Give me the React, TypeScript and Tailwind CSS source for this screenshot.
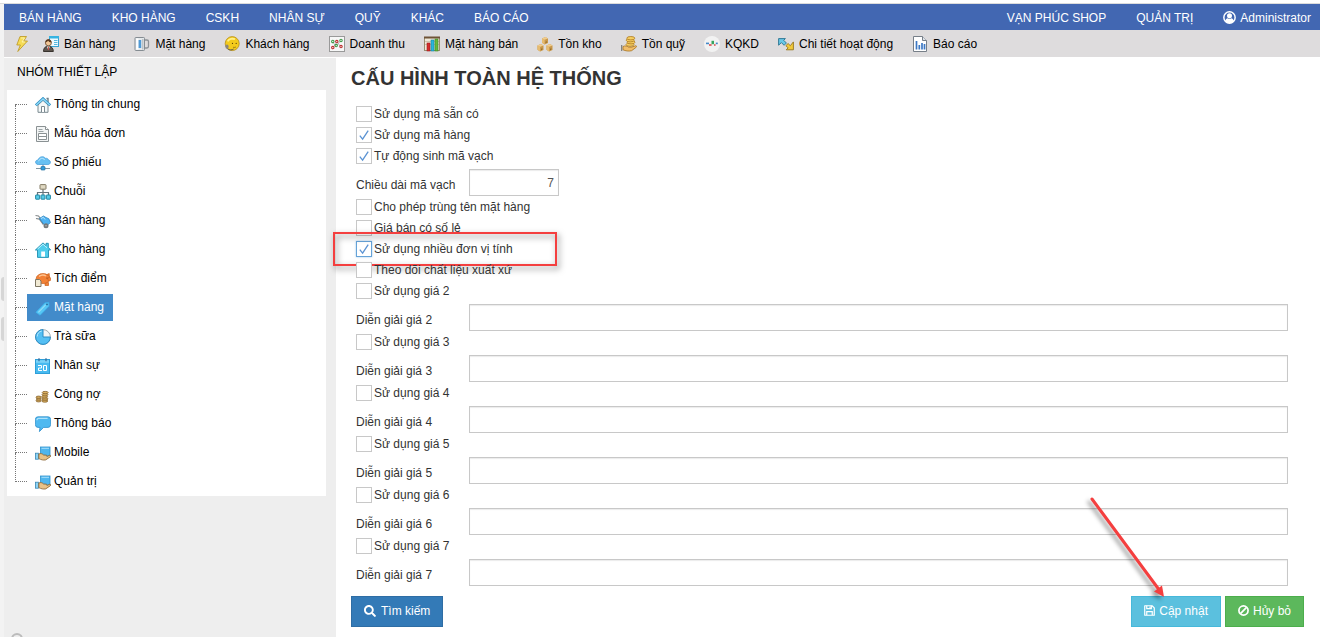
import type { ReactNode } from "react";
import { FaSearch } from "react-icons/fa";

/* Glyphs for the menu and buttons */

const UserGlyph = () => (
  <svg className="h-[13px] w-[13px]" viewBox="0 0 14 14">
    <circle cx="7" cy="7" r="6.1" fill="none" stroke="#fff" strokeWidth="1.6" />
    <circle cx="7" cy="5.2" r="2.7" fill="#fff" />
    <path d="M2.2 10.9c.6-2 1.8-3 2.9-3.2 1.1.8 2.7.8 3.8 0 1.1.2 2.3 1.2 2.9 3.2-2.4 3-7.2 3-9.6 0z" fill="#fff" />
  </svg>
);

const SaveGlyph = () => (
  <svg className="h-[11px] w-[11px]" viewBox="0 0 12 12" fill="none" stroke="#fff" strokeWidth="1.3">
    <path d="M.8.8h8l2.4 2.4v8H.8z" strokeLinejoin="round" />
    <path d="M3 .8V4h5V.8M3 11V7.2h6V11" />
    <path d="M6.6 1.5v1.8" />
  </svg>
);

const BanGlyph = () => (
  <svg className="h-[11px] w-[11px]" viewBox="0 0 12 12" fill="none" stroke="#fff" strokeWidth="1.9">
    <circle cx="6" cy="6" r="5" />
    <path d="M2.7 9.3l6.6-6.6" />
  </svg>
);

/* Toolbar icons */

const BoltIcon = () => (
  <svg className="h-4 w-4 shrink-0" viewBox="0 0 16 16">
    <path d="M6 .5h6.5L9.8 5h3.7L3.8 15.5 6.4 9H2.8z" fill="#f6dc55" stroke="#c09d2c" strokeWidth=".9" strokeLinejoin="round" />
    <path d="M7 2h3.5L8 6h3" fill="none" stroke="#fff6b8" strokeWidth=".8" />
  </svg>
);

const SellerIcon = () => (
  <svg className="h-4 w-4 shrink-0" viewBox="0 0 16 16">
    <rect x="6.5" y=".5" width="9" height="10" fill="#eefaff" stroke="#36a3d2" />
    <rect x="6" y="0" width="10" height="2.5" fill="#36b4e2" />
    <path d="M11 4.5h3.5M11 6.5h3.5M11 8.5h3.5" stroke="#58b8de" />
    <path d="M.5 15.5c0-3.6 1.7-5.2 4.8-5.2s5 1.6 5 5.2z" fill="#5d554e" stroke="#38332e" />
    <path d="M3.8 10.4l1.6 3.6L7 10.4z" fill="#fff" />
    <path d="M5.4 11v3" stroke="#c6413a" />
    <circle cx="5.4" cy="6.8" r="3" fill="#f1c696" stroke="#6b4526" strokeWidth=".8" />
    <path d="M2.3 6.6c0-4.6 6.2-4.6 6.2 0-2-.2-2.8-1-3.4-1.8-.6.8-1.4 1.4-2.8 1.8z" fill="#5b3a20" />
  </svg>
);

const MugIcon = () => (
  <svg className="h-4 w-4 shrink-0" viewBox="0 0 16 16">
    <path d="M10.5 4h2.4q1.6 0 1.6 1.6v4.6q0 1.8-1.6 1.8h-2.4" fill="none" stroke="#8d9297" strokeWidth="1.3" />
    <rect x="1" y="1.5" width="9.5" height="13" rx=".8" fill="#e4e9ec" stroke="#858c92" />
    <rect x="2.2" y="2.5" width="2.2" height="11" fill="#fff" />
    <rect x="4.6" y="4" width="2.6" height="8" fill="#4f9ad6" />
    <path d="M8.8 3v10.5" stroke="#b4babf" strokeWidth="1.2" />
  </svg>
);

const SupportIcon = () => (
  <svg className="h-4 w-4 shrink-0" viewBox="0 0 16 16">
    <circle cx="8.2" cy="7.6" r="7" fill="#f4cb1c" stroke="#b58e1a" strokeWidth=".8" />
    <path d="M3.6 5.4C5 2.8 8.5 2.2 11 3.2" fill="none" stroke="#fff08a" strokeWidth="1.8" />
    <circle cx="8.5" cy="7.4" r=".6" fill="#5c4208" />
    <circle cx="12.2" cy="7.4" r=".6" fill="#5c4208" />
    <path d="M9 11.2c1.100.4 2.100.3 3-.3" fill="none" stroke="#8a6812" strokeWidth=".8" />
    <ellipse cx="3" cy="10.6" rx="1.6" ry="2.2" fill="#8a867d" />
    <path d="M3.6 12.8c1.800 1.400 4.200 1.400 6 .2" fill="none" stroke="#66614f" />
  </svg>
);

const ScatterIcon = () => (
  <svg className="h-4 w-4 shrink-0" viewBox="0 0 16 16">
    <rect x=".5" y=".5" width="15" height="15" fill="#f7f7f7" stroke="#999" />
    <path d="M3.5 6l3.5 4 5-5.5M4 11.5L8 6l4 5" fill="none" stroke="#a9a9a9" strokeWidth=".8" />
    <g fill="#fff" strokeWidth="1.1">
      <circle cx="3.8" cy="5.4" r="1.2" stroke="#3f9b49" />
      <circle cx="7.2" cy="9.6" r="1.2" stroke="#3f9b49" />
      <circle cx="12" cy="4.4" r="1.2" stroke="#3f9b49" />
      <circle cx="3.8" cy="11.6" r="1.2" stroke="#bc3030" />
      <circle cx="7.8" cy="5.6" r="1.2" stroke="#bc3030" />
      <circle cx="12" cy="10.6" r="1.2" stroke="#bc3030" />
    </g>
  </svg>
);

const BarsIcon = () => (
  <svg className="h-4 w-4 shrink-0" viewBox="0 0 16 16">
    <rect x=".5" y="1.5" width="15" height="13" fill="#eee8d8" stroke="#9a8c70" />
    <path d="M0 1.5h16" stroke="#6f5336" strokeWidth="2" />
    <path d="M1 5.5h14M1 8.5h14" stroke="#cdc4b0" />
    <rect x="3" y="7" width="3" height="8" fill="#d52c2c" stroke="#9c1c1c" strokeWidth=".6" />
    <rect x="7" y="4" width="3" height="11" fill="#29b6dc" stroke="#1683a3" strokeWidth=".6" />
    <rect x="11" y="3" width="3" height="12" fill="#65b83c" stroke="#3e8423" strokeWidth=".6" />
  </svg>
);

const BoxesIcon = () => (
  <svg className="h-4 w-4 shrink-0" viewBox="0 0 16 16">
    {["translate(5 1)", "translate(.5 8)", "translate(9.5 8)"].map((t) => (
      <g key={t} transform={t}>
        <path d="M0 1.5L3.4 0 6 1.4V6L2.6 7.4 0 5.8z" fill="#c8974a" />
        <path d="M0 1.5l2.6 1.3v4.6L0 5.8z" fill="#e6bb70" />
        <path d="M0 1.5L3.4 0 6 1.4 2.6 2.8z" fill="#f0cd8e" />
        <path d="M3.6 4.8l1.2-.6v1.4l-1.2.6z" fill="#8d6728" />
      </g>
    ))}
  </svg>
);

const CoinHandIcon = () => (
  <svg className="h-4 w-4 shrink-0" viewBox="0 0 16 16">
    <path d="M.7 9v6" stroke="#797979" strokeWidth="1.2" />
    <path d="M2 10.5c2-1 4-.6 5.5.6h3.2l4.2-1.4c1 .2.8 1.2 0 1.8l-4.3 3.2c-3 .8-6 .2-8.6-.9z" fill="#f1bd69" stroke="#a77420" strokeWidth=".8" />
    <g fill="#f6cf60" stroke="#b4822a" strokeWidth=".9">
      <ellipse cx="9" cy="8.6" rx="4" ry="1.7" />
      <ellipse cx="10" cy="6.2" rx="4" ry="1.7" />
      <ellipse cx="9.2" cy="4.2" rx="4" ry="1.7" />
      <ellipse cx="9.8" cy="2.2" rx="4" ry="1.7" />
    </g>
  </svg>
);

const ResultIcon = () => (
  <svg className="h-4 w-4 shrink-0" viewBox="0 0 16 16">
    <circle cx="8" cy="8" r="8" fill="#f2f2f2" />
    <path d="M2 7.4h3" stroke="#4689c8" strokeWidth="1.6" />
    <path d="M5 9h2.6" stroke="#da4848" strokeWidth="1.6" />
    <path d="M7.5 6.5H10" stroke="#38a45e" strokeWidth="3.4" />
    <path d="M10 9h1.6" stroke="#da4848" strokeWidth="1.6" />
    <path d="M11.8 7.4h2" stroke="#4689c8" strokeWidth="1.6" />
  </svg>
);

const ArrowsIcon = () => (
  <svg className="h-4 w-4 shrink-0" viewBox="0 0 16 16">
    <path d="M.6 2.6h6.8L5.7 4.3 8.4 7 6.1 9.3 3.4 6.6.6 9.2z" fill="#68c8e7" stroke="#27708d" strokeWidth=".9" />
    <path d="M15.4 5.9v7.9H8.2l1.9-1.9-2.2-2.2 2.2-2.2 2.2 2.2z" fill="#f1ca3c" stroke="#967519" strokeWidth=".9" />
  </svg>
);

const ReportIcon = () => (
  <svg className="h-4 w-4 shrink-0" viewBox="0 0 16 16">
    <path d="M1.5.5h9l4 4v11h-13z" fill="#fff" stroke="#777f88" />
    <path d="M10.5.5v4h4" fill="#dfe4ea" stroke="#777f88" />
    <path d="M4.5 13.5V5M7.3 13.5V9M10 13.5V7M12.5 13.5V8" stroke="#3d78c4" strokeWidth="1.7" />
  </svg>
);

/* Tree icons */

const HomeLineIcon = () => (
  <svg className="h-4 w-4 shrink-0" viewBox="0 0 16 16">
    <path d="M3 8v7.3h10V8L8 3.4z" fill="#f4f8f9" stroke="#7b8a90" />
    <path d="M11.5 1.5H13v4" stroke="#6c7e87" strokeWidth="1.4" fill="none" />
    <path d="M.8 8.4L8 1.6l7.2 6.8" fill="none" stroke="#2f8fc3" strokeWidth="2.6" />
    <path d="M1.2 8.1L8 1.9l6.8 6.2" fill="none" stroke="#8edaf8" strokeWidth="1.3" />
    <path d="M6.5 15V9.5h3V15" fill="#fff" stroke="#7b8a90" />
  </svg>
);

const InvoiceIcon = () => (
  <svg className="h-4 w-4 shrink-0" viewBox="0 0 16 16">
    <path d="M1.5.5h9l3 3v12h-12z" fill="#f3f5f5" stroke="#8a9193" />
    <path d="M10.5.5v3h3" fill="#fff" stroke="#8a9193" />
    <path d="M3.5 3.5h4M3.5 5.5h5" stroke="#9aa3a5" />
    <path d="M3.5 7.5h8v6h-8zM3.5 10.5h8" fill="#fff" stroke="#8a9193" />
  </svg>
);

const CloudIcon = () => (
  <svg className="h-4 w-4 shrink-0" viewBox="0 0 16 16">
    <path d="M8 9v4M1 13.5h14" stroke="#8697a1" strokeWidth="1.2" />
    <path d="M3.5 9.5C-.5 9.5-.2 4.8 3.2 5 4 1.2 9 .8 10.3 3.3c2-.3 3 .7 3 1.7 3 .5 2.8 4.5-.4 4.5z" fill="#67c0f2" stroke="#4a9fdc" strokeWidth=".8" />
    <path d="M3.6 6.2C5 3 8.2 2.3 9.6 5" stroke="#c4ecff" fill="none" />
    <rect x="6" y="11.5" width="4" height="3.5" rx=".6" fill="#339bda" stroke="#22719f" strokeWidth=".7" />
  </svg>
);

const ChainIcon = () => (
  <svg className="h-4 w-4 shrink-0" viewBox="0 0 16 16">
    <path d="M8 5v6M2.5 11V8.5h11V11" fill="none" stroke="#66747b" strokeWidth="1.2" />
    <rect x="5" y=".6" width="6" height="4.6" rx=".6" fill="#dfd8c2" stroke="#837b65" />
    <g fill="#58cbe7" stroke="#2388a4">
      <rect x=".6" y="11" width="4" height="4.2" rx=".4" />
      <rect x="6" y="11" width="4" height="4.2" rx=".4" />
      <rect x="11.4" y="11" width="4" height="4.2" rx=".4" />
    </g>
  </svg>
);

const CartIcon = () => (
  <svg className="h-4 w-4 shrink-0" viewBox="0 0 16 16">
    <path d="M.5 2.5l3 .5 7 9M1 5.5l3.4.6 4 5.6" fill="none" stroke="#84898b" strokeWidth="1.2" />
    <path d="M4.5 5.5L8.4 3 11 4.5l2.8 1.2 1.7 3.8-3.3 2.8-3.4-1z" fill="#4eb2f2" stroke="#2c83bf" strokeWidth=".8" />
    <path d="M6 5.5l2.3-1.2 1.8 2.2" fill="none" stroke="#b5e4fd" />
    <circle cx="11" cy="12.8" r="2.5" fill="#73787b" />
    <circle cx="11" cy="12.8" r=".8" fill="#b3b7b9" />
  </svg>
);

const HomeSolidIcon = () => (
  <svg className="h-4 w-4 shrink-0" viewBox="0 0 16 16">
    <path d="M11 1.3h2.3v4L15.6 8H13.5v7.4h-11V8H.4L8 .9l3 2.7z" fill="#4fcdec" stroke="#1e8fb1" strokeWidth=".9" strokeLinejoin="round" />
    <path d="M2.6 7L8 2.2l4 3.6" fill="none" stroke="#bdf1ff" />
    <rect x="6.2" y="9.5" width="3.8" height="5.2" fill="#fff" />
  </svg>
);

const PiggyIcon = () => (
  <svg className="h-4 w-4 shrink-0" viewBox="0 0 16 16">
    <g fill="#f28136" stroke="#c9601d" strokeWidth=".7">
      <path d="M10 11.500h3.500v3H10z" />
      <path d="M11 4l3.200-1.500.2 3.500z" />
      <ellipse cx="8" cy="7.6" rx="6.8" ry="5" />
      <rect x="13" y="6.4" width="2.6" height="3.4" rx="1" />
    </g>
    <path d="M4 5.400c2.200-1.600 5-1.700 7-.4" stroke="#ffc492" fill="none" strokeWidth="1.4" />
    <circle cx="12" cy="7" r=".6" fill="#6a2b08" />
    <path d="M.5 8.5h4L6 10v5.500H.5z" fill="#f1ead4" stroke="#7e7764" />
  </svg>
);

const TagIcon = () => (
  <svg className="h-4 w-4 shrink-0" viewBox="0 0 16 16">
    <path d="M1 12.3L9.8 2.9l3.9-.5.3 3.8-8.9 9z" fill="#55c6f4" stroke="#3fb1ec" strokeWidth=".8" />
    <path d="M3.4 12.4l7.2-7.5" stroke="#93dcf8" strokeWidth="1.2" />
    <circle cx="12" cy="4.4" r=".9" fill="#28689c" />
  </svg>
);

const PieIcon = () => (
  <svg className="h-4 w-4 shrink-0" viewBox="0 0 16 16">
    <circle cx="8" cy="8" r="7.4" fill="#f3f5f6" stroke="#a3acb1" />
    <path d="M8 .6a7.4 7.4 0 1 0 7.4 7.4H8z" fill="#55bff3" stroke="#2a8cc5" />
    <path d="M2.2 7.5A6 6 0 0 1 6.8 2" fill="none" stroke="#b5e7fd" />
  </svg>
);

const CalendarIcon = () => (
  <svg className="h-4 w-4 shrink-0" viewBox="0 0 16 16">
    <rect x=".5" y="1.5" width="14" height="14" fill="#48baf0" stroke="#2f9fd8" />
    <path d="M1 3.5h13" stroke="#7bd2f7" strokeWidth="2.6" />
    <path d="M4 .3v3M11 .3v3" stroke="#386c9b" strokeWidth="1.3" />
    <path d="M3 7.5h3.5V10h-3v2.5H7M8.5 7.5h3v5h-3z" fill="none" stroke="#fff" />
  </svg>
);

const DebtIcon = () => (
  <svg className="h-4 w-4 shrink-0" viewBox="0 0 16 16">
    <g fill="#dcb263" stroke="#83602a" strokeWidth=".8">
      <ellipse cx="3.6" cy="13.8" rx="2.6" ry="1.1" />
      <ellipse cx="3.8" cy="12" rx="2.6" ry="1.1" />
      <ellipse cx="3.6" cy="10.2" rx="2.6" ry="1.1" />
      <ellipse cx="9.8" cy="14" rx="3" ry="1.2" />
      <ellipse cx="10" cy="11.9" rx="3" ry="1.2" />
      <ellipse cx="9.6" cy="9.8" rx="3" ry="1.2" />
      <ellipse cx="10" cy="7.7" rx="3" ry="1.2" />
      <ellipse cx="10.2" cy="5.6" rx="3" ry="1.2" />
    </g>
  </svg>
);

const BubbleIcon = () => (
  <svg className="h-4 w-4 shrink-0" viewBox="0 0 16 16">
    <path d="M3 .8h10q2.6 0 2.6 2.6v5.2q0 2.8-2.6 2.8H8.6l-4.2 4.2.6-4.2H3Q.4 11.4.4 8.6V3.4Q.4.8 3 .8z" fill="#4fb9f0" stroke="#2c8ecb" strokeWidth=".8" />
    <path d="M2 4.2q0-1.8 1.6-1.8h9" fill="none" stroke="#aee2fb" strokeWidth="1.2" />
  </svg>
);

const HandIcon = () => (
  <svg className="h-4 w-4 shrink-0" viewBox="0 0 16 16">
    <rect x="5.5" y="2" width="9.5" height="9.5" fill="#4fb6ee" stroke="#2f92cd" strokeWidth=".8" />
    <path d="M6.5 3.3h7.5" stroke="#a8e0fb" />
    <rect x=".5" y="8.2" width="3" height="6" fill="#8cd3f5" stroke="#3a87b3" strokeWidth=".8" />
    <path d="M3.8 9c2-.9 3.6-.2 4.8 1l3 .2.3 1.2 3-1.2c1.1.1 1 1.1.2 1.7l-4.4 3c-2.4.5-4.8-.2-6.9-1.3z" fill="#e9c287" stroke="#86602c" strokeWidth=".8" />
  </svg>
);

/* Data */

const menu = ["BÁN HÀNG", "KHO HÀNG", "CSKH", "NHÂN SỰ", "QUỸ", "KHÁC", "BÁO CÁO"];

const shortcuts: { label: string; icon: ReactNode }[] = [
  { label: "Bán hàng", icon: <SellerIcon /> },
  { label: "Mặt hàng", icon: <MugIcon /> },
  { label: "Khách hàng", icon: <SupportIcon /> },
  { label: "Doanh thu", icon: <ScatterIcon /> },
  { label: "Mặt hàng bán", icon: <BarsIcon /> },
  { label: "Tồn kho", icon: <BoxesIcon /> },
  { label: "Tồn quỹ", icon: <CoinHandIcon /> },
  { label: "KQKD", icon: <ResultIcon /> },
  { label: "Chi tiết hoạt động", icon: <ArrowsIcon /> },
  { label: "Báo cáo", icon: <ReportIcon /> },
];

const tree: { label: string; icon: ReactNode; active?: boolean }[] = [
  { label: "Thông tin chung", icon: <HomeLineIcon /> },
  { label: "Mẫu hóa đơn", icon: <InvoiceIcon /> },
  { label: "Số phiếu", icon: <CloudIcon /> },
  { label: "Chuỗi", icon: <ChainIcon /> },
  { label: "Bán hàng", icon: <CartIcon /> },
  { label: "Kho hàng", icon: <HomeSolidIcon /> },
  { label: "Tích điểm", icon: <PiggyIcon /> },
  { label: "Mặt hàng", icon: <TagIcon />, active: true },
  { label: "Trà sữa", icon: <PieIcon /> },
  { label: "Nhân sự", icon: <CalendarIcon /> },
  { label: "Công nợ", icon: <DebtIcon /> },
  { label: "Thông báo", icon: <BubbleIcon /> },
  { label: "Mobile", icon: <HandIcon /> },
  { label: "Quản trị", icon: <HandIcon /> },
];

const prices = [2, 3, 4, 5, 6, 7];

/* Form rows */

const CheckRow = ({ label, checked, marked }: { label: string; checked?: boolean; marked?: boolean }) => (
  <div className="relative flex h-[21px] items-center">
    <label className="flex items-center gap-[2px]">
      <span className="grid">
        <input
          type="checkbox"
          defaultChecked={checked}
          className={`peer col-start-1 row-start-1 h-4 w-4 appearance-none border bg-white ${
            marked ? "border-[#66a3d8] shadow-[0_0_2px_#9cc6ea]" : "border-[#c8c8c8]"
          }`}
        />
        <svg
          className="pointer-events-none invisible col-start-1 row-start-1 h-4 w-4 peer-checked:visible"
          viewBox="0 0 16 16"
        >
          <path d="M3.8 8.6l2.8 3.6L12.2 3.6" fill="none" stroke="#5b93d3" strokeWidth="1.3" />
        </svg>
      </span>
      {label}
    </label>
    {marked && (
      <div className="pointer-events-none absolute -top-[6px] -left-[23px] h-[34px] w-[224px] border-2 border-[#f43f3f] drop-shadow-[2px_3px_3px_rgba(0,0,0,0.5)]" />
    )}
  </div>
);

const FieldRow = ({ id, label, short }: { id: string; label: string; short?: boolean }) => (
  <div className="flex items-start pt-[3px]">
    <label htmlFor={id} className="w-[113px] shrink-0 pt-2 leading-4">
      {label}
    </label>
    <input
      id={id}
      type="text"
      defaultValue={short ? "7" : ""}
      className={`h-[27px] border border-[#c8c8c8] bg-white px-1 text-[#555] shadow-[inset_0_1px_1px_rgba(0,0,0,0.08)] outline-none ${
        short ? "w-[90px] text-right" : "min-w-0 flex-1"
      }`}
    />
  </div>
);

export default function App() {
  return (
    <div className="flex min-h-screen flex-col overflow-hidden bg-white font-['Liberation_Sans',Arial,sans-serif] text-xs text-black">
      <div className="h-1 border-b border-[#dcdcdc] bg-white" />
      <div className="flex flex-1">
        {/* Splitter */}
        <div className="flex w-1 shrink-0 flex-col gap-4 bg-[#f3f3f3] pt-[273px]">
          <div className="ml-px h-6 rounded-l-sm bg-[#d6d6d6]" />
          <div className="ml-px h-6 rounded-l-sm bg-[#d6d6d6]" />
        </div>

        <div className="flex min-w-0 flex-1 flex-col">
          {/* Main menu */}
          <nav className="flex h-[26px] items-center justify-between bg-[#4267b2] pt-px text-white">
            <div className="flex">
              {menu.map((item) => (
                <a key={item} href="#" className="px-[15px]">
                  {item}
                </a>
              ))}
            </div>
            <div className="flex">
              <a href="#" className="px-[15px]">VẠN PHÚC SHOP</a>
              <a href="#" className="px-[15px]">QUẢN TRỊ</a>
              <a href="#" className="flex items-center gap-1 pr-[9px] pl-[15px]">
                <UserGlyph />
                Administrator
              </a>
            </div>
          </nav>

          {/* Shortcuts */}
          <div className="flex h-[27px] items-center gap-[19px] bg-[#dedcdd] pl-[10px]">
            <a href="#" className="-mr-[6px]" aria-label="Nhanh">
              <BoltIcon />
            </a>
            {shortcuts.map((s) => (
              <a key={s.label} href="#" className="flex items-center gap-[5px]">
                {s.icon}
                {s.label}
              </a>
            ))}
          </div>

          <div className="mt-px flex flex-1">
            {/* Settings tree */}
            <aside className="flex w-[332px] shrink-0 flex-col bg-[#eee] pr-[10px] pl-[3px]">
              <h2 className="flex h-8 items-center px-[10px] pb-1">NHÓM THIẾT LẬP</h2>
              <ul className="bg-white pl-2">
                {tree.map((item, i) => (
                  <li key={item.label} className="flex h-[29px] items-center">
                    <span className="flex h-full w-3 flex-col">
                      <span
                        className={`h-[15px] border-b border-dotted border-[#777] ${i > 0 ? "border-l" : ""}`}
                      />
                      <span
                        className={`h-[14px] border-dotted border-[#777] ${i < tree.length - 1 ? "border-l" : ""}`}
                      />
                    </span>
                    <a
                      href="#"
                      className={`flex h-[27px] items-center gap-[3px] pr-[9px] pb-[2px] pl-2 ${
                        item.active ? "bg-[#428bca] text-white" : ""
                      }`}
                    >
                      <span className="pt-[2px]">{item.icon}</span>
                      {item.label}
                    </a>
                  </li>
                ))}
              </ul>
              <div className="mt-auto -mb-2 ml-1 h-3 w-3 rounded-full border-2 border-[#bbb]" />
            </aside>

            {/* Settings form */}
            <main className="min-w-0 flex-1 pr-4 pl-[15px] text-[#333]">
              <h1 className="h-[45px] pt-1 text-xl leading-8 font-bold">CẤU HÌNH TOÀN HỆ THỐNG</h1>
              <form onSubmit={(e) => e.preventDefault()}>
                <div className="pr-4 pl-[5px]">
                  <CheckRow label="Sử dụng mã sẵn có" />
                  <CheckRow label="Sử dụng mã hàng" checked />
                  <CheckRow label="Tự động sinh mã vạch" checked />
                  <FieldRow id="barcode" label="Chiều dài mã vạch" short />
                  <CheckRow label="Cho phép trùng tên mặt hàng" />
                  <CheckRow label="Giá bán có số lẻ" />
                  <CheckRow label="Sử dụng nhiều đơn vị tính" checked marked />
                  <CheckRow label="Theo dõi chất liệu xuất xứ" />
                  {prices.map((n) => (
                    <div key={n}>
                      <CheckRow label={`Sử dụng giá ${n}`} />
                      <FieldRow id={`price-${n}`} label={`Diễn giải giá ${n}`} />
                    </div>
                  ))}
                </div>

                <div className="flex gap-1 pt-[10px] text-white">
                  <button
                    type="button"
                    className="mr-auto flex h-[31px] items-center gap-[5px] border border-[#2e6da4] bg-[#337ab7] px-3 pb-[2px]"
                  >
                    <FaSearch size={12} />
                    Tìm kiếm
                  </button>
                  <button
                    type="submit"
                    className="relative flex h-[31px] items-center gap-1 border border-[#46b8da] bg-[#5bc0de] px-3 pb-[2px]"
                  >
                    <SaveGlyph />
                    Cập nhật
                    <svg
                      className="pointer-events-none absolute right-[50px] bottom-[22px] h-[112px] w-[84px] drop-shadow-[-3px_3px_2px_rgba(0,0,0,0.4)]"
                      viewBox="0 0 84 112"
                    >
                      <path d="M6 7l68 92" stroke="#f43f3f" strokeWidth="3" strokeLinecap="round" />
                      <path d="M78 105l-10-5.5 8-6z" fill="#f43f3f" />
                    </svg>
                  </button>
                  <button
                    type="button"
                    className="flex h-[31px] items-center gap-1 border border-[#4cae4c] bg-[#5cb85c] px-3 pb-[2px]"
                  >
                    <BanGlyph />
                    Hủy bỏ
                  </button>
                </div>
              </form>
            </main>
          </div>
        </div>
      </div>
    </div>
  );
}
